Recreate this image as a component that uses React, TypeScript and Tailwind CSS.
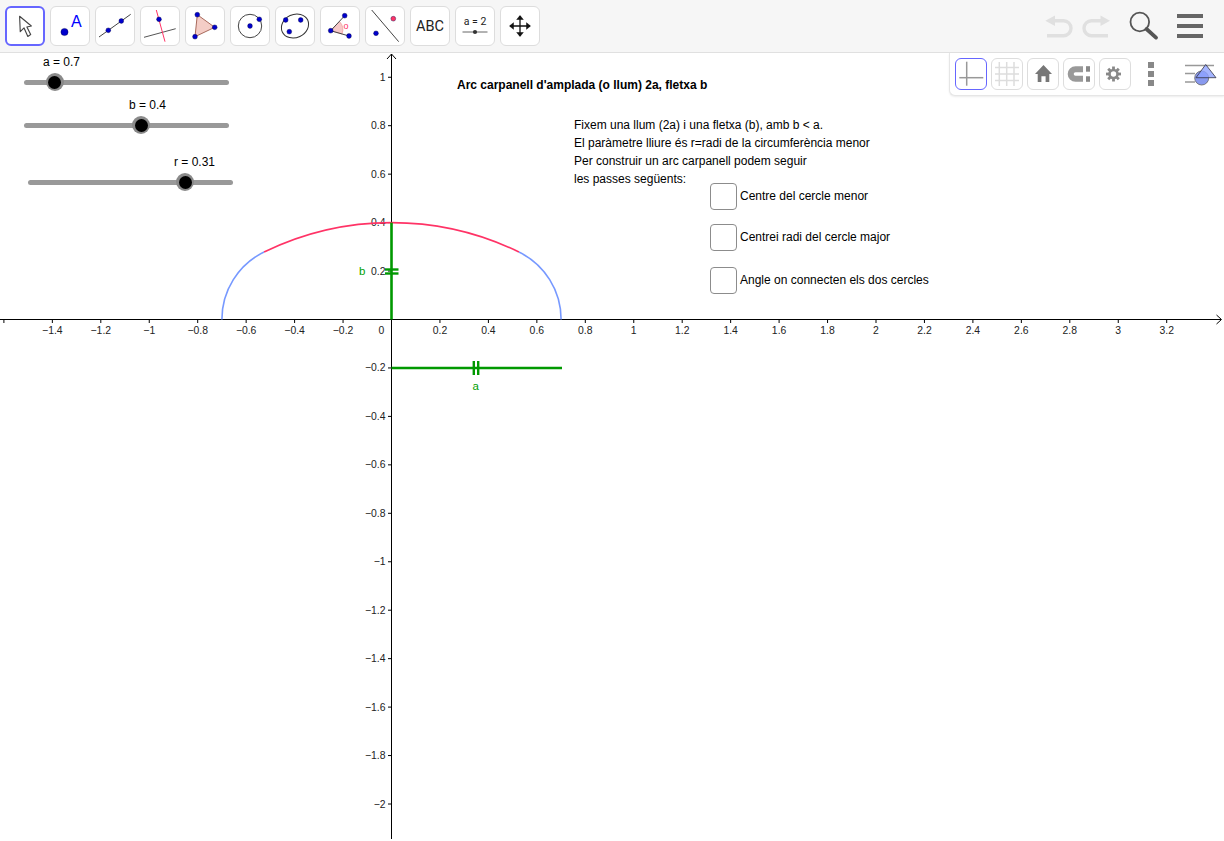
import React from "react";

const UNIT = 242.25;
const OX = 391.5;
const OY = 319.5;

const xTicks = [-1.6, -1.4, -1.2, -1, -0.8, -0.6, -0.4, -0.2, 0.2, 0.4, 0.6, 0.8, 1, 1.2, 1.4, 1.6, 1.8, 2, 2.2, 2.4, 2.6, 2.8, 3, 3.2];
const yTicks = [1, 0.8, 0.6, 0.4, 0.2, -0.2, -0.4, -0.6, -0.8, -1, -1.2, -1.4, -1.6, -1.8, -2];

const fmt = (v: number) => (v < 0 ? "\u2212" : "") + Math.abs(v);

const Dot = ({ x, y, r = 2.4, fill = "#0000cc" }: { x: number; y: number; r?: number; fill?: string }) => (
    <circle cx={x} cy={y} r={r} fill={fill} stroke="#000044" strokeWidth={0.4} />
);

function ToolIcon({ children }: { children: React.ReactNode }) {
    return (
        <svg width="38" height="38" viewBox="1 1 38 38" fill="none">
            {children}
        </svg>
    );
}

const tools: React.ReactNode[] = [
    <path key="move" d="M14.3 9.7L15 26L19 22L23 31L26 29L22 21L26.7 20Z" fill="#fff" stroke="#444" strokeWidth="1.2" strokeLinejoin="round" />,
    <g key="point">
        <Dot x={14.5} y={26} r={3.6} />
        <text x="21" y="21" fontSize="16" fill="#0000ff" fontFamily="Liberation Sans, sans-serif">A</text>
    </g>,
    <g key="line">
        <line x1="4" y1="31" x2="35.7" y2="8.3" stroke="#444" strokeWidth="1" />
        <Dot x={13.3} y={24.3} />
        <Dot x={26.3} y={15} />
    </g>,
    <g key="perp">
        <line x1="4" y1="31.3" x2="35.7" y2="22.7" stroke="#555" strokeWidth="1" />
        <line x1="16.3" y1="4" x2="25" y2="35.7" stroke="#ff3366" strokeWidth="1" />
        <Dot x={19} y={13.3} />
    </g>,
    <g key="polygon">
        <path d="M12.3 8.7L29.7 21.3L10 30.7Z" fill="#f4cdc6" stroke="#a86a5c" strokeWidth="1" />
        <Dot x={12.3} y={8.7} />
        <Dot x={29.7} y={21.3} />
        <Dot x={10} y={30.7} />
    </g>,
    <g key="circle">
        <circle cx="20" cy="20" r="11.7" stroke="#444" strokeWidth="1" />
        <Dot x={20} y={20} />
        <Dot x={29.3} y={13.3} />
    </g>,
    <g key="conic">
        <ellipse cx="20" cy="20" rx="14" ry="11.5" transform="rotate(-25 20 20)" stroke="#333" strokeWidth="1" />
        <Dot x={10.7} y={14} />
        <Dot x={25.7} y={14} />
        <Dot x={14.3} y={25.7} />
    </g>,
    <g key="angle">
        <path d="M10.7 24.7L19.5 15.5A12 12 0 0 1 22 28Z" fill="#f6c8c8" stroke="#e88" strokeWidth="0.6" />
        <path d="M24.7 9.7L10.7 24.7L29 30" stroke="#444" strokeWidth="1" />
        <Dot x={10.7} y={24.7} />
        <Dot x={24.7} y={9.7} />
        <Dot x={29} y={30} />
        <text x="23.5" y="22.5" fontSize="9" fill="#ff3366" fontFamily="Liberation Sans, sans-serif">o</text>
    </g>,
    <g key="mirror">
        <line x1="6.7" y1="4" x2="33.7" y2="35.7" stroke="#444" strokeWidth="1" />
        <Dot x={28.3} y={12.7} fill="#ff3366" />
        <Dot x={11} y={27.3} />
    </g>,
    <text key="abc" x="20" y="25.3" textAnchor="middle" fontSize="14.5" fill="#222" fontFamily="Roboto, sans-serif">ABC</text>,
    <g key="slider">
        <text x="20" y="18.5" textAnchor="middle" fontSize="10.5" fill="#222" fontFamily="Roboto, sans-serif">a = 2</text>
        <line x1="7.5" y1="26" x2="32.5" y2="26" stroke="#666" strokeWidth="1" />
        <circle cx="20" cy="26" r="2.1" fill="#333" />
    </g>,
    <g key="pan" fill="#111" stroke="#111">
        <path d="M10 20H30M20 10V30" strokeWidth="1.3" />
        <path d="M20 9.5L23.3 13.5H16.7Z" strokeWidth="0.5" />
        <path d="M20 30.5L23.3 26.5H16.7Z" strokeWidth="0.5" />
        <path d="M9.5 20L13.5 16.7V23.3Z" strokeWidth="0.5" />
        <path d="M30.5 20L26.5 16.7V23.3Z" strokeWidth="0.5" />
    </g>,
];

const gearAngles = [0, 45, 90, 135];

const styleIcons: React.ReactNode[] = [
    <g key="axes" stroke="#999" strokeWidth="1.5">
        <line x1="11.7" y1="3.7" x2="11.7" y2="27.7" />
        <line x1="4.3" y1="19.7" x2="28.3" y2="19.7" />
    </g>,
    <g key="grid" stroke="#ddd" strokeWidth="1.5">
        <path d="M8.3 4V28M15.7 4V28M23 4V28M4 9.5H28M4 16H28M4 22.5H28" />
    </g>,
    <path key="home" d="M16.5 7L25 16H22.3V24H18.6V18.3H14.4V24H10.7V16H8Z" fill="#777" />,
    <g key="magnet">
        <path d="M20 11.2H12.5A4.8 4.8 0 0 0 12.5 20.8H20" stroke="#999" strokeWidth="6" />
        <rect x="23" y="8.2" width="4" height="5.5" fill="#888" />
        <rect x="23" y="18.3" width="4" height="5.5" fill="#888" />
    </g>,
    <g key="gear" stroke="#888">
        {gearAngles.map((a) => (
            <line key={a} x1="14.5" y1="8.5" x2="14.5" y2="23.5" strokeWidth="2.8" transform={`rotate(${a} 14.5 16)`} />
        ))}
        <circle cx="14.5" cy="16" r="4" fill="#fff" strokeWidth="2.6" />
    </g>,
];

function Slider({ className, handleClass, label, labelClass }: { className: string; handleClass: string; label: string; labelClass: string }) {
    return (
        <div className={"absolute w-[205px] h-[18px] " + className}>
            <div className={"absolute text-[12px] leading-[14px] whitespace-nowrap text-black " + labelClass}>{label}</div>
            <div className="absolute left-0 right-0 top-[7px] h-[5px] rounded-full bg-[#999999]" />
            <div className={"absolute top-0 w-[18px] h-[18px] rounded-full bg-[#8a8a8a] flex items-center justify-center " + handleClass}>
                <div className="w-[13px] h-[13px] rounded-full bg-black" />
            </div>
        </div>
    );
}

function CheckRow({ label, className }: { label: string; className?: string }) {
    return (
        <div className={"flex items-center h-[27px] " + (className ?? "")}>
            <div className="w-[27px] h-[27px] rounded-[4px] border-[1.5px] border-[#8c8c8c] bg-white" />
            <span className="ml-[3.5px] text-[12px] text-black whitespace-nowrap">{label}</span>
        </div>
    );
}

export default function App() {
    return (
        <div className="w-[1224px] h-[841px] overflow-hidden flex flex-col bg-white font-['Liberation_Sans',Arial,sans-serif]">
            {/* toolbar */}
            <div className="h-[53px] shrink-0 flex items-start justify-between bg-[#f6f6f6] border-b border-[#e0e0e0] pt-[6px] pl-[5px]">
                <div className="flex gap-[5px]">
                    {tools.map((icon, i) => (
                        <div
                            key={i}
                            className={
                                i === 0
                                    ? "w-10 h-10 rounded-[6px] bg-white border-2 border-[#6666ff] flex items-center justify-center"
                                    : "w-10 h-10 rounded-[6px] bg-white border border-[#dddddd] flex items-center justify-center"
                            }
                        >
                            <ToolIcon>{icon}</ToolIcon>
                        </div>
                    ))}
                </div>
                <div className="flex items-center mt-[-6px] h-[52px] pr-[21px]">
                    <svg width="66" height="30" viewBox="1045 11 66 30" fill="none">
                        <path d="M1054 20.7H1063.5A7.5 7.5 0 0 1 1063.5 35.7H1047" stroke="#e0e0e0" strokeWidth="3.4" />
                        <path d="M1045.3 20.7L1055 15.5V26Z" fill="#e0e0e0" />
                        <path d="M1101 20.7H1091.5A7.5 7.5 0 0 0 1091.5 35.7H1108" stroke="#e0e0e0" strokeWidth="3.4" />
                        <path d="M1110 20.7L1100.5 15.5V26Z" fill="#e0e0e0" />
                    </svg>
                    <svg className="ml-[17px]" width="32" height="32" viewBox="1127 11 32 32" fill="none">
                        <circle cx="1138.8" cy="23" r="9.3" stroke="#555" strokeWidth="1.8" />
                        <line x1="1145.5" y1="30" x2="1155" y2="38.6" stroke="#555" strokeWidth="3.8" strokeLinecap="round" />
                    </svg>
                    <div className="ml-[17px] w-[26px] flex flex-col gap-[6.5px]">
                        <div className="h-[3.5px] bg-[#666666]" />
                        <div className="h-[3.5px] bg-[#666666]" />
                        <div className="h-[3.5px] bg-[#666666]" />
                    </div>
                </div>
            </div>

            {/* graphics view */}
            <div className="relative flex-1">
                <svg className="absolute inset-0 w-full h-full" viewBox="0 53 1224 788" fill="none">
                    <line x1="0" y1={OY} x2="1221" y2={OY} stroke="#000" strokeWidth="1" />
                    <path d="M1216.5 315L1221.5 319.5L1216.5 324" stroke="#000" strokeWidth="1" />
                    <line x1={OX} y1="54" x2={OX} y2="839" stroke="#000" strokeWidth="1" />
                    <path d="M387 59L391.5 54L396 59" stroke="#000" strokeWidth="1" />

                    {xTicks.map((v) => {
                        const x = OX + v * UNIT;
                        return (
                            <g key={v}>
                                <line x1={x} y1={OY} x2={x} y2={OY + 3.5} stroke="#000" strokeWidth="1" />
                                {v !== -1.6 && (
                                    <text x={x} y="333.5" textAnchor="middle" fontSize="10.4" fill="#222" fontFamily="Liberation Sans, sans-serif">{fmt(v)}</text>
                                )}
                            </g>
                        );
                    })}
                    {yTicks.map((v) => {
                        const y = OY - v * UNIT;
                        return (
                            <g key={v}>
                                <line x1={OX - 3.5} y1={y} x2={OX} y2={y} stroke="#000" strokeWidth="1" />
                                <text x="385.5" y={y + 3.5} textAnchor="end" fontSize="10.4" fill="#222" fontFamily="Liberation Sans, sans-serif">{fmt(v)}</text>
                            </g>
                        );
                    })}
                    <text x="381.5" y="333.5" textAnchor="middle" fontSize="10.4" fill="#222" fontFamily="Liberation Sans, sans-serif">0</text>

                    {/* arc carpanell */}
                    <path d="M221.9 319.5A75.1 75.1 0 0 1 264.1 252" stroke="#7799ff" strokeWidth="1.6" />
                    <path d="M518.9 252A75.1 75.1 0 0 1 561.1 319.5" stroke="#7799ff" strokeWidth="1.6" />
                    <path d="M264.1 252A290.7 290.7 0 0 1 518.9 252" stroke="#ff3366" strokeWidth="1.6" />

                    {/* segments */}
                    <g stroke="#009900" strokeWidth="2.6">
                        <line x1={OX} y1="222.6" x2={OX} y2={OY} />
                        <line x1="385" y1="269.5" x2="398.5" y2="269.5" strokeWidth="2.4" />
                        <line x1="385" y1="273.5" x2="398.5" y2="273.5" strokeWidth="2.4" />
                        <line x1={OX} y1="368" x2="562" y2="368" />
                        <line x1="473.8" y1="361" x2="473.8" y2="375" strokeWidth="2.4" />
                        <line x1="478.2" y1="361" x2="478.2" y2="375" strokeWidth="2.4" />
                    </g>
                    <text x="359" y="275" fontSize="11.5" fill="#00a000" fontFamily="Liberation Sans, sans-serif">b</text>
                    <text x="472.5" y="390" fontSize="11.5" fill="#00a000" fontFamily="Liberation Sans, sans-serif">a</text>
                </svg>

                <Slider className="left-[24px] top-[20px]" handleClass="left-[21.5px]" label="a = 0.7" labelClass="left-[19px] top-[-18px]" />
                <Slider className="left-[24px] top-[63px]" handleClass="left-[108px]" label="b = 0.4" labelClass="left-[105px] top-[-18px]" />
                <Slider className="left-[28px] top-[120px]" handleClass="left-[148px]" label="r = 0.31" labelClass="left-[146px] top-[-18px]" />

                <div className="absolute left-[457px] top-[25px] text-[12px] leading-[14px] font-bold text-black whitespace-nowrap">
                    Arc carpanell d'amplada (o llum) 2a, fletxa b
                </div>

                <div className="absolute left-[574px] top-[63px] text-[12px] leading-[18px] text-black whitespace-nowrap">
                    <p>Fixem una llum (2a) i una fletxa (b), amb b &lt; a.</p>
                    <p>El paràmetre lliure és r=radi de la circumferència menor</p>
                    <p>Per construir un arc carpanell podem seguir</p>
                    <p>les passes següents:</p>
                </div>

                <div className="absolute left-[709.5px] top-[129.5px] flex flex-col">
                    <CheckRow label="Centre del cercle menor" />
                    <CheckRow label="Centrei radi del cercle major" className="mt-[14px]" />
                    <CheckRow label="Angle on connecten els dos cercles" className="mt-[16px]" />
                </div>

                {/* style bar */}
                <div className="absolute right-0 top-0 w-[275px] h-[43px] bg-white rounded-bl-[6px] border-l border-b border-[#e6e6e6] shadow-[0_1px_2px_rgba(0,0,0,0.08)] flex items-start pt-[5px] pl-[5px]">
                    <div className="flex gap-[4px]">
                        {styleIcons.map((icon, i) => (
                            <div
                                key={i}
                                className={
                                    i === 0
                                        ? "w-8 h-8 rounded-[6px] border border-[#6666ff] bg-white"
                                        : "w-8 h-8 rounded-[6px] border border-[#dddddd] bg-white"
                                }
                            >
                                <svg width="30" height="30" viewBox="1 1 30 30" fill="none">{icon}</svg>
                            </div>
                        ))}
                    </div>
                    <div className="ml-[17px] mt-[4px] w-[5.5px] flex flex-col gap-[3.5px]">
                        <div className="h-[5.5px] bg-[#888888]" />
                        <div className="h-[5.5px] bg-[#888888]" />
                        <div className="h-[5.5px] bg-[#888888]" />
                    </div>
                    <svg className="ml-[30px] mt-[4px]" width="34" height="26" viewBox="1184 62 34 26" fill="none">
                        <path d="M1185 65.5H1214M1185 73.5H1195M1185 82H1195" stroke="#999" strokeWidth="1.6" />
                        <circle cx="1201.7" cy="78" r="7" fill="#8899ee" stroke="#666" strokeWidth="0.8" />
                        <path d="M1205.7 64.5L1216 77.7H1196Z" fill="#8fa3ff" fillOpacity="0.8" stroke="#334" strokeWidth="0.8" />
                    </svg>
                </div>
            </div>
        </div>
    );
}
